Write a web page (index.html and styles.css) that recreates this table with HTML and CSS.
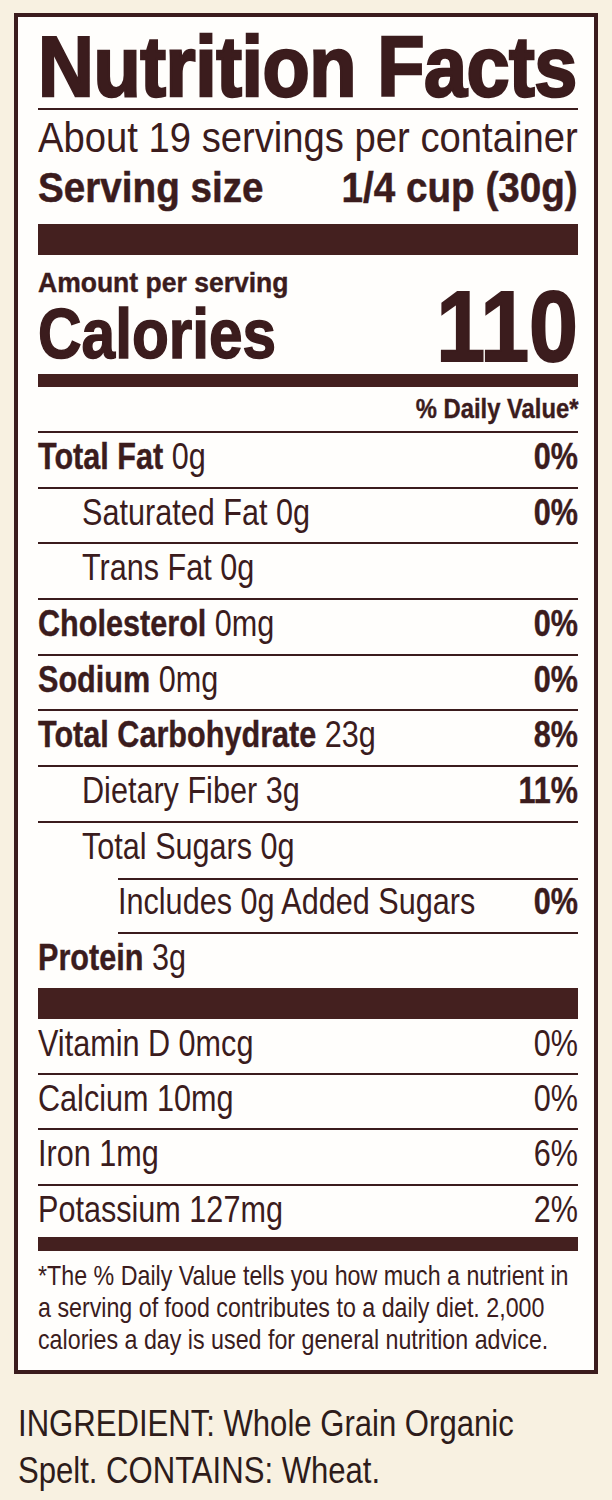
FILE: index.html
```html
<!DOCTYPE html>
<html lang="en">
<head>
<meta charset="utf-8">
<title>Nutrition Facts</title>
<link rel="stylesheet" href="styles.css">
</head>
<body>
<div class="label">
  <div class="title"><span class="t">Nutrition Facts</span></div>
  <div class="servings"><span class="t">About 19 servings per container</span></div>
  <div class="serving-size"><span class="t">Serving size</span><span class="t r">1/4 cup (30g)</span></div>
  <div class="bar bar-thick"></div>
  <div class="calories">
    <div class="cal-left">
      <div class="amount"><span class="t">Amount per serving</span></div>
      <div class="cal-word"><span class="t">Calories</span></div>
    </div>
    <div class="cal-num"><span class="t r">110</span></div>
  </div>
  <div class="bar bar-mid"></div>
  <div class="dv-head"><span class="t r">% Daily Value*</span></div>
  <div class="row"><span class="t"><b>Total Fat</b> 0g</span><span class="t r"><b>0%</b></span></div>
  <div class="row ind1"><span class="t">Saturated Fat 0g</span><span class="t r"><b>0%</b></span></div>
  <div class="row ind1"><span class="t">Trans Fat 0g</span></div>
  <div class="row"><span class="t"><b>Cholesterol</b> 0mg</span><span class="t r"><b>0%</b></span></div>
  <div class="row"><span class="t"><b>Sodium</b> 0mg</span><span class="t r"><b>0%</b></span></div>
  <div class="row"><span class="t"><b>Total Carbohydrate</b> 23g</span><span class="t r"><b>8%</b></span></div>
  <div class="row ind1"><span class="t">Dietary Fiber 3g</span><span class="t r"><b>11%</b></span></div>
  <div class="row ind1 sugars"><span class="t">Total Sugars 0g</span></div>
  <div class="row added"><span class="t">Includes 0g Added Sugars</span><span class="t r"><b>0%</b></span></div>
  <div class="row protein"><span class="t"><b>Protein</b> 3g</span></div>
  <div class="bar bar-thick bar-low"></div>
  <div class="row vit first"><span class="t">Vitamin D 0mcg</span><span class="t r">0%</span></div>
  <div class="row vit"><span class="t">Calcium 10mg</span><span class="t r">0%</span></div>
  <div class="row vit"><span class="t">Iron 1mg</span><span class="t r">6%</span></div>
  <div class="row vit last"><span class="t">Potassium 127mg</span><span class="t r">2%</span></div>
  <div class="bar bar-foot"></div>
  <div class="foot">
    <span class="t">*The % Daily Value tells you how much a nutrient in</span>
    <span class="t">a serving of food contributes to a daily diet. 2,000</span>
    <span class="t">calories a day is used for general nutrition advice.</span>
  </div>
</div>
<div class="ingredients">
  <span class="t">INGREDIENT: Whole Grain Organic</span>
  <span class="t">Spelt. CONTAINS: Wheat.</span>
</div>
</body>
</html>
```

FILE: styles.css
```css
html, body {
  margin: 0;
  padding: 0;
}
body {
  background: #f8f1e1;
  color: #3b1c1d;
  font-family: "Liberation Sans", Arial, sans-serif;
  width: 612px;
  height: 1500px;
  overflow: hidden;
}

/* condensed text: each run is squeezed horizontally */
.t {
  display: inline-block;
  white-space: nowrap;
  transform: scaleX(var(--s, 0.85));
  transform-origin: left center;
}
.t.r {
  transform-origin: right center;
}
b {
  font-weight: 700;
  -webkit-text-stroke: 0.4px #3b1c1d;
}

.label {
  box-sizing: border-box;
  width: 584px;
  margin: 13px 0 0 14px;
  border: 4px solid #3b1c1d;
  background: #fffefc;
  padding: 9.5px 16px 0 20px;
}
.title {
  --s: 0.91;
  font-size: 85px;
  line-height: 80px;
  font-weight: 700;
  letter-spacing: -0.5px;
  -webkit-text-stroke: 2.5px #3b1c1d;
  white-space: nowrap;
  padding-bottom: 1px;
  border-bottom: 2px solid #3b1c1d;
}
.servings {
  --s: 0.91;
  font-size: 42px;
  line-height: 46px;
  margin-top: 5px;
  white-space: nowrap;
}
.serving-size {
  --s: 0.92;
  display: flex;
  justify-content: space-between;
  font-size: 42px;
  line-height: 46px;
  font-weight: 700;
  -webkit-text-stroke: 0.5px #3b1c1d;
  margin-top: 4px;
  white-space: nowrap;
}
.bar {
  background: #44201f;
}
.bar-thick {
  height: 31px;
  margin-top: 13.5px;
}
.bar-low {
  margin-top: 0;
}
.bar-mid {
  height: 13px;
  margin-top: 9.6px;
}
.bar-foot {
  height: 14px;
}
.calories {
  display: flex;
  justify-content: space-between;
  align-items: flex-end;
  padding-top: 13.3px;
  white-space: nowrap;
}
.amount {
  --s: 0.947;
  font-size: 28px;
  line-height: 30px;
  font-weight: 700;
  -webkit-text-stroke: 0.4px #3b1c1d;
}
.cal-word {
  --s: 0.85;
  font-size: 71px;
  line-height: 60px;
  font-weight: 700;
  margin-top: 6px;
  -webkit-text-stroke: 1.5px #3b1c1d;
}
.cal-num {
  --s: 0.87;
  font-size: 101px;
  line-height: 76px;
  font-weight: 700;
  -webkit-text-stroke: 2px #3b1c1d;
}
.dv-head {
  --s: 0.85;
  text-align: right;
  font-size: 28px;
  line-height: 30px;
  font-weight: 700;
  -webkit-text-stroke: 0.4px #3b1c1d;
  padding-top: 7.3px;
  padding-bottom: 6.7px;
  border-bottom: 2px solid #3b1c1d;
}
.row {
  --s: 0.85;
  display: flex;
  justify-content: space-between;
  font-size: 36px;
  line-height: 44px;
  height: 44px;
  padding-top: 2px;
  padding-bottom: 7.7px;
  border-bottom: 2px solid #3b1c1d;
  white-space: nowrap;
}
.row .t {
  min-width: 0;
  flex-shrink: 1;
}
.row .t.r {
  flex-shrink: 0;
}
.ind1 {
  padding-left: 44px;
}
.row.sugars {
  border-bottom: 0;
  padding-bottom: 9.7px;
}
.row.added {
  border-top: 2px solid #3b1c1d;
  margin-left: 80px;
  padding-top: 0;
}
.row.protein {
  border-bottom: 0;
  padding-bottom: 7.7px;
}
.row.vit.first {
  padding-top: 3px;
  padding-bottom: 7px;
}
.row.vit.last {
  border-bottom: 0;
  padding-bottom: 4.6px;
}
.foot {
  --s: 0.83;
  display: flex;
  flex-direction: column;
  align-items: flex-start;
  font-size: 28px;
  line-height: 32px;
  padding-top: 9.6px;
  padding-bottom: 13.4px;
}
.ingredients {
  --s: 0.84;
  display: flex;
  flex-direction: column;
  align-items: flex-start;
  margin: 26px 0 0 18px;
  font-size: 37px;
  line-height: 47px;
  color: #2e1c1a;
}
```
